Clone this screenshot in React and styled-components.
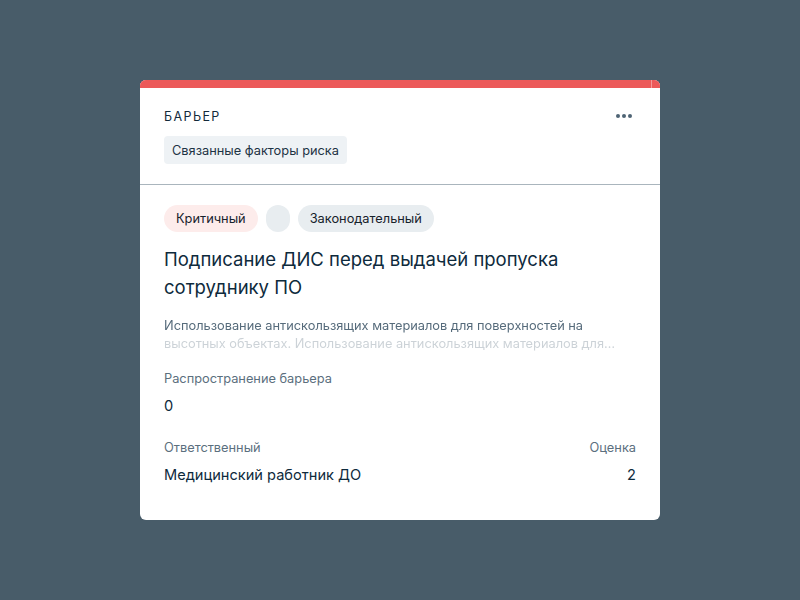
import React from "react";
import styled, { createGlobalStyle } from "styled-components";

const Global = createGlobalStyle`
  html, body { margin: 0; padding: 0; }
  body {
    background: #485c69;
    font-family: Inter, "Noto Sans", "Liberation Sans", sans-serif;
    -webkit-font-smoothing: antialiased;
  }
`;

const Page = styled.div`
  width: 800px;
  height: 600px;
  display: flex;
  align-items: center;
  justify-content: center;
`;

const Card = styled.div`
  width: 520px;
  height: 440px;
  background: #ffffff;
  border-radius: 6px;
  overflow: hidden;
  display: flex;
  flex-direction: column;
`;

const TopBar = styled.div`
  display: flex;
  gap: 1px;
  height: 8px;
  background: #f39a9a;
`;

const BarSegment = styled.div`
  background: #ec5a5a;
  flex: ${(p) => (p.$grow ? 1 : "0 0 8px")};
`;

const Header = styled.div`
  padding: 18px 24px 20px;
  border-bottom: 1px solid #aab5bd;
  display: flex;
  flex-direction: column;
  gap: 10px;
`;

const HeaderRow = styled.div`
  display: flex;
  align-items: center;
  justify-content: space-between;
  height: 20px;
`;

const Kind = styled.div`
  font-size: 12.5px;
  letter-spacing: 1.4px;
  color: #13293a;
  text-transform: uppercase;
`;

const Dots = styled.div`
  display: flex;
  gap: 2px;
  margin-right: 4px;
`;

const Dot = styled.span`
  width: 4px;
  height: 4px;
  border-radius: 50%;
  background: #4e6474;
`;

const Tag = styled.div`
  align-self: flex-start;
  height: 28px;
  padding: 0 8px;
  display: flex;
  align-items: center;
  background: #eef2f5;
  border-radius: 4px;
  font-size: 12.8px;
  color: #1d3344;
`;

const Body = styled.div`
  padding: 20px 24px 0;
  display: flex;
  flex-direction: column;
`;

const Pills = styled.div`
  display: flex;
  gap: 8px;
  margin-bottom: 13px;
`;

const Pill = styled.div`
  height: 27px;
  min-width: 24px;
  box-sizing: border-box;
  padding: ${(p) => (p.$empty ? "0" : "0 12px")};
  border-radius: 14px;
  display: flex;
  align-items: center;
  font-size: 12.8px;
  color: #17222b;
  background: ${(p) => p.$bg};
`;

const Title = styled.div`
  font-size: 18.5px;
  line-height: 28px;
  color: #0e2a3c;
  margin-bottom: 16px;
`;

const Description = styled.div`
  font-size: 12.8px;
  line-height: 18px;
  max-height: 36px;
  width: 456px;
  overflow: hidden;
  display: -webkit-box;
  -webkit-line-clamp: 2;
  -webkit-box-orient: vertical;
  color: #566b7b;
  -webkit-mask-image: linear-gradient(to bottom, #000 0, #000 18px, rgba(0,0,0,0.3) 18px, rgba(0,0,0,0.3) 36px);
  mask-image: linear-gradient(to bottom, #000 0, #000 18px, rgba(0,0,0,0.3) 18px, rgba(0,0,0,0.3) 36px);
  margin-bottom: 16px;
`;

const Field = styled.div`
  display: flex;
  flex-direction: column;
  align-items: ${(p) => (p.$right ? "flex-end" : "flex-start")};
  gap: 6px;
`;

const Label = styled.div`
  font-size: 12.8px;
  line-height: 20px;
  color: #5b6f7e;
`;

const Value = styled.div`
  font-size: 14.6px;
  line-height: 22px;
  color: #0e2a3c;
`;

const Row = styled.div`
  display: flex;
  justify-content: space-between;
  margin-top: 21px;
`;

export default function App() {
  return (
    <>
      <Global />
      <Page>
        <Card>
          <TopBar>
            <BarSegment $grow />
            <BarSegment />
          </TopBar>
          <Header>
            <HeaderRow>
              <Kind>Барьер</Kind>
              <Dots>
                <Dot />
                <Dot />
                <Dot />
              </Dots>
            </HeaderRow>
            <Tag>Связанные факторы риска</Tag>
          </Header>
          <Body>
            <Pills>
              <Pill $bg="#fdeceb">Критичный</Pill>
              <Pill $bg="#e8edf0" $empty />
              <Pill $bg="#e8edf0">Законодательный</Pill>
            </Pills>
            <Title>Подписание ДИС перед выдачей пропуска сотруднику ПО</Title>
            <Description>
              Использование антискользящих материалов для поверхностей на
              высотных объектах. Использование антискользящих материалов для
              поверхностей на высотных объектах.
            </Description>
            <Field>
              <Label>Распространение барьера</Label>
              <Value>0</Value>
            </Field>
            <Row>
              <Field>
                <Label>Ответственный</Label>
                <Value>Медицинский работник ДО</Value>
              </Field>
              <Field $right>
                <Label>Оценка</Label>
                <Value>2</Value>
              </Field>
            </Row>
          </Body>
        </Card>
      </Page>
    </>
  );
}
